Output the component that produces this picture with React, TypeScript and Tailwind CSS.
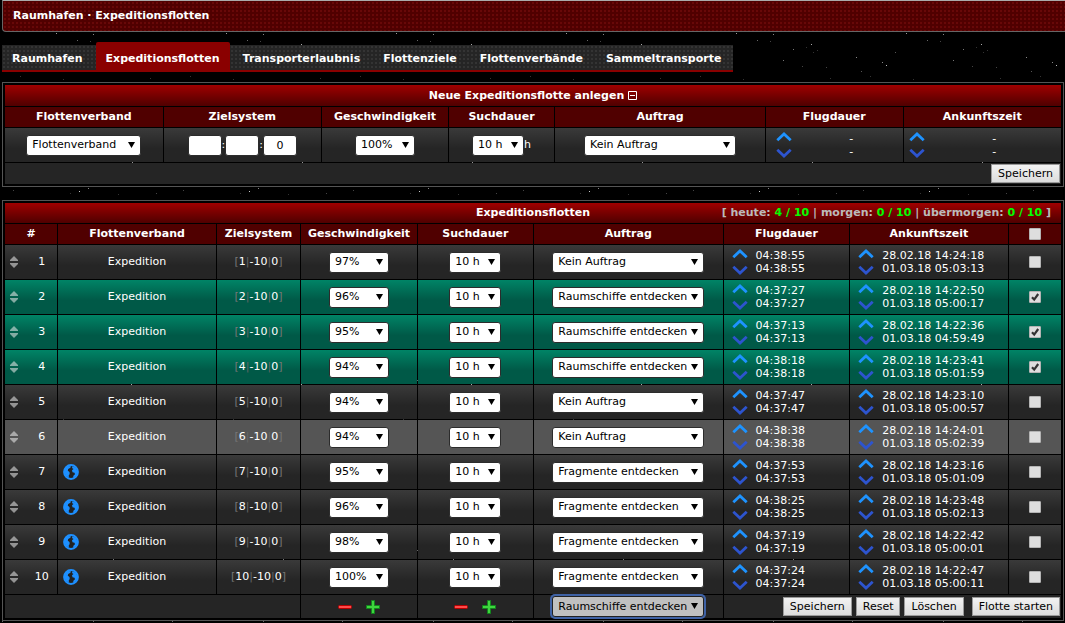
import { useId } from 'react';
import type { ReactNode } from 'react';

const tabs = [
  'Raumhafen',
  'Expeditionsflotten',
  'Transporterlaubnis',
  'Flottenziele',
  'Flottenverbände',
  'Sammeltransporte',
];

const missions = ['Kein Auftrag', 'Raumschiffe entdecken', 'Fragmente entdecken'];
const speeds = ['100%', '98%', '97%', '96%', '95%', '94%'];

const fleets = [
  { id: 1, speed: '97%', mission: 0, duration: '04:38:55', arrival: '28.02.18 14:24:18', back: '01.03.18 05:03:13' },
  { id: 2, speed: '96%', mission: 1, duration: '04:37:27', arrival: '28.02.18 14:22:50', back: '01.03.18 05:00:17', checked: true },
  { id: 3, speed: '95%', mission: 1, duration: '04:37:13', arrival: '28.02.18 14:22:36', back: '01.03.18 04:59:49', checked: true },
  { id: 4, speed: '94%', mission: 1, duration: '04:38:18', arrival: '28.02.18 14:23:41', back: '01.03.18 05:01:59', checked: true },
  { id: 5, speed: '94%', mission: 0, duration: '04:37:47', arrival: '28.02.18 14:23:10', back: '01.03.18 05:00:57' },
  { id: 6, speed: '94%', mission: 0, duration: '04:38:38', arrival: '28.02.18 14:24:01', back: '01.03.18 05:02:39', active: true },
  { id: 7, speed: '95%', mission: 2, duration: '04:37:53', arrival: '28.02.18 14:23:16', back: '01.03.18 05:01:09', flying: true },
  { id: 8, speed: '96%', mission: 2, duration: '04:38:25', arrival: '28.02.18 14:23:48', back: '01.03.18 05:02:13', flying: true },
  { id: 9, speed: '98%', mission: 2, duration: '04:37:19', arrival: '28.02.18 14:22:42', back: '01.03.18 05:00:01', flying: true },
  { id: 10, speed: '100%', mission: 2, duration: '04:37:24', arrival: '28.02.18 14:22:47', back: '01.03.18 05:00:11', flying: true },
];

const titleCell = 'bg-linear-to-b from-[#a00000] to-[#500000] p-0 font-bold';
const headCell = 'h-5 bg-[#500000] p-0 font-bold';
const darkCell = 'bg-linear-to-b from-[#3a3a3a] to-[#252525] to-60%';
const greenCell = 'bg-linear-to-b from-[#008466] to-[#005947] to-60%';
const activeCell = 'bg-[#555555]';

// x, y, brightness
const stars: [number, number, string][] = [
  [56, 33, '#999'], [93, 34, '#888'], [77, 40, '#666'], [90, 41, '#444'], [131, 44, '#aaa'],
  [113, 49, '#777'], [103, 60, '#777'], [45, 52, '#555'], [6, 57, '#888'], [32, 62, '#888'],
  [36, 65, '#bbb'], [11, 71, '#555'], [146, 67, '#444'], [133, 52, '#333'], [126, 47, '#333'],
  [137, 50, '#333'], [122, 66, '#444'], [20, 76, '#333'], [150, 78, '#333'], [63, 79, '#333'],
  [79, 21, '#ccc'], [88, 18, '#888'], [13, 20, '#444'], [70, 23, '#333'], [118, 24, '#333'],
  [98, 16, '#333'], [156, 23, '#444'], [132, 162, '#999'], [60, 96, '#555'], [45, 125, '#555'],
  [93, 111, '#666'], [2, 111, '#666'],
];

function Stars() {
  return (
    <svg className="absolute inset-0 -z-10 h-full w-full" aria-hidden="true">
      <defs>
        <pattern id="stars" width="170" height="170" patternUnits="userSpaceOnUse">
          {stars.map(([x, y, fill]) => (
            <rect key={`${x}-${y}`} x={x} y={y} width="1" height="1" fill={fill} />
          ))}
        </pattern>
      </defs>
      <rect width="100%" height="100%" fill="url(#stars)" />
    </svg>
  );
}

type SelectProps = {
  label: string;
  options: string[];
  value: string;
  width: string;
  focused?: boolean;
};

function Select({ label, options, value, width, focused }: SelectProps) {
  const id = useId();
  return (
    <span className={`relative inline-block h-[21px] align-middle ${width}`}>
      <label htmlFor={id} className="sr-only">
        {label}
      </label>
      <select
        id={id}
        defaultValue={value}
        className={`block h-[21px] w-full appearance-none rounded-[3px] border pl-[5px] text-[11px] text-black outline-none ${
          focused ? 'border-[#222] bg-[#c0c0c0] ring-2 ring-[#3f62a5]' : 'border-[#2c2c2c] bg-white'
        }`}
      >
        {options.map((option) => (
          <option key={option}>{option}</option>
        ))}
      </select>
      <svg viewBox="0 0 7 6" className="pointer-events-none absolute top-[7px] right-[6px] h-[6px] w-[7px]">
        <path d="M0 0h7L3.5 6z" fill="#000" />
      </svg>
    </span>
  );
}

function Checkbox({ label, checked }: { label: string; checked?: boolean }) {
  return (
    <span className="relative inline-block h-3 w-3 align-middle">
      <input
        type="checkbox"
        aria-label={label}
        defaultChecked={checked}
        className="peer block h-3 w-3 appearance-none rounded-[1px] border border-[#b4b4b4] bg-[#dedede]"
      />
      <svg viewBox="0 0 12 12" className="pointer-events-none absolute inset-0 hidden h-3 w-3 peer-checked:block">
        <path d="M3 6.2 5.2 8.6 9.2 3" fill="none" stroke="#333" strokeWidth="2.2" />
      </svg>
    </span>
  );
}

function Button({ children }: { children: ReactNode }) {
  return (
    <button
      type="button"
      className="h-[19px] border border-[#9a9a9a] bg-linear-to-b from-[#f2f2f2] to-[#dcdcdc] px-[6px] text-[11px] leading-[17px] text-black"
    >
      {children}
    </button>
  );
}

function UpDown() {
  return (
    <span className="flex w-4 flex-none flex-col gap-[6px]">
      <button type="button" aria-label="Früher" className="block h-[10px] w-4">
        <svg viewBox="0 0 16 10" className="block h-[10px] w-4">
          <path d="M1.3 8.2 8 2 14.7 8.2" fill="none" stroke="#1e93ff" strokeWidth="2.8" />
        </svg>
      </button>
      <button type="button" aria-label="Später" className="block h-[10px] w-4">
        <svg viewBox="0 0 16 10" className="block h-[10px] w-4">
          <path d="M1.3 1.8 8 8 14.7 1.8" fill="none" stroke="#2d54cf" strokeWidth="2.8" />
        </svg>
      </button>
    </span>
  );
}

function Times({ first, second }: { first: string; second: string }) {
  return (
    <div className="flex items-center gap-2 pl-2 text-left leading-[13px]">
      <UpDown />
      <div>
        <div>{first}</div>
        <div>{second}</div>
      </div>
    </div>
  );
}

function SortHandle() {
  return (
    <svg viewBox="0 0 8 12" className="h-3 w-2 flex-none" opacity="0.55">
      <path d="M4 0 8 4v1H0V4zM0 7h8v1L4 12 0 8z" fill="#eee" />
    </svg>
  );
}

function Globe() {
  return (
    <svg viewBox="0 0 16 16" className="h-4 w-4">
      <circle cx="8" cy="8" r="6.9" fill="#222" stroke="#1e90ff" strokeWidth="2" />
      <path d="M2 4 5 2l3 .3-.6 1.5L5.200 5l-.4 1.800L6.500 8l.2 2-1 1.500.3 2.300L2.800 12 1.200 8z" fill="#1e90ff" />
      <path d="M9.500 2.300 13 3.800l1.800 4.400-1.400 3.600L10.500 14l-.3-2 1.800-1.700-.5-1.500-2-.6-.5-2 1.500-1.200L9 4z" fill="#1e90ff" />
    </svg>
  );
}

function PlusMinus() {
  return (
    <div className="flex items-center justify-center gap-3">
      <button type="button" aria-label="Weniger" className="h-4 w-4">
        <svg viewBox="0 0 16 16" className="h-4 w-4">
          <rect x="1.500" y="6.500" width="13" height="3" rx="1" fill="#ff4a4a" stroke="#b80000" />
        </svg>
      </button>
      <button type="button" aria-label="Mehr" className="h-4 w-4">
        <svg viewBox="0 0 16 16" className="h-4 w-4">
          <path d="M6.500 1.500h3v5h5v3h-5v5h-3v-5h-5v-3h5z" fill="#3ed63e" stroke="#12861d" />
        </svg>
      </button>
    </div>
  );
}

function CoordInput({ label, value }: { label: string; value?: string }) {
  return (
    <input
      type="text"
      aria-label={label}
      defaultValue={value}
      className="h-[21px] w-[34px] rounded-[3px] border border-[#2c2c2c] bg-white text-center text-[11px] text-black"
    />
  );
}

function Count({ value }: { value: string }) {
  return <span className="text-[#00ff00]">{value}</span>;
}

function NewFleet() {
  return (
    <section className="mt-[10px] mr-px ml-[2px] border border-[#555] p-px">
      <table className="w-full table-fixed border-separate border-spacing-px text-center">
        <colgroup>
          <col className="w-[15%]" />
          <col className="w-[15%]" />
          <col className="w-[12%]" />
          <col className="w-[10%]" />
          <col className="w-[20%]" />
          <col className="w-[13%]" />
          <col className="w-[15%]" />
        </colgroup>
        <thead>
          <tr>
            <th colSpan={7} className={`h-[21px] ${titleCell}`}>
              <div className="flex items-center justify-center gap-1">
                Neue Expeditionsflotte anlegen
                <button type="button" aria-label="Einklappen">
                  <svg viewBox="0 0 9 9" className="block h-[9px] w-[9px]">
                    <path d="M.5.5h8v8h-8zM2 4.500h5" fill="none" stroke="#fff" />
                  </svg>
                </button>
              </div>
            </th>
          </tr>
          <tr>
            <th className={headCell}>Flottenverband</th>
            <th className={headCell}>Zielsystem</th>
            <th className={headCell}>Geschwindigkeit</th>
            <th className={headCell}>Suchdauer</th>
            <th className={headCell}>Auftrag</th>
            <th className={headCell}>Flugdauer</th>
            <th className={headCell}>Ankunftszeit</th>
          </tr>
        </thead>
        <tbody>
          <tr>
            <td className={`h-[34px] p-0 ${darkCell}`}>
              <Select label="Flottenverband" options={['Flottenverband']} value="Flottenverband" width="w-[115px]" />
            </td>
            <td className={`p-0 ${darkCell}`}>
              <div className="flex items-center justify-center">
                <CoordInput label="Galaxie" />:
                <CoordInput label="System" />:
                <CoordInput label="Planet" value="0" />
              </div>
            </td>
            <td className={`p-0 ${darkCell}`}>
              <Select label="Geschwindigkeit" options={speeds} value="100%" width="w-[60px]" />
            </td>
            <td className={`p-0 ${darkCell}`}>
              <div className="flex items-center justify-center">
                <Select label="Suchdauer" options={['10 h']} value="10 h" width="w-[52px]" />h
              </div>
            </td>
            <td className={`p-0 ${darkCell}`}>
              <Select label="Auftrag" options={missions} value={missions[0]} width="w-[152px]" />
            </td>
            <td className={`p-0 ${darkCell}`}>
              <div className="flex items-center gap-2 pl-[10px] leading-[13px]">
                <UpDown />
                <div className="flex-1">
                  <div>-</div>
                  <div>-</div>
                </div>
              </div>
            </td>
            <td className={`p-0 ${darkCell}`}>
              <div className="flex items-center gap-2 px-[5px] leading-[13px]">
                <UpDown />
                <div className="flex-1">
                  <div>-</div>
                  <div>-</div>
                </div>
              </div>
            </td>
          </tr>
          <tr>
            <td colSpan={7} className="h-[21px] bg-[#252525] p-0">
              <div className="flex justify-end pr-px">
                <Button>Speichern</Button>
              </div>
            </td>
          </tr>
        </tbody>
      </table>
    </section>
  );
}

function FleetList() {
  return (
    <section className="mt-[13px] mr-px ml-[2px] border border-[#555] p-px">
      <table className="w-full table-fixed border-separate border-spacing-px text-center">
        <colgroup>
          <col className="w-[5%]" />
          <col className="w-[15%]" />
          <col className="w-[8%]" />
          <col className="w-[11%]" />
          <col className="w-[11%]" />
          <col className="w-[18%]" />
          <col className="w-[12%]" />
          <col className="w-[15%]" />
          <col className="w-[5%]" />
        </colgroup>
        <thead>
          <tr>
            <th colSpan={9} className={`h-5 ${titleCell}`}>
              <div className="grid grid-cols-[1fr_auto_1fr] items-center pr-[10px] pl-[10px]">
                <span className="col-start-2">Expeditionsflotten</span>
                <span className="text-right whitespace-nowrap text-[#bbb]">
                  [ heute: <Count value="4 / 10" /> | morgen: <Count value="0 / 10" /> | übermorgen:{' '}
                  <Count value="0 / 10" /> ]
                </span>
              </div>
            </th>
          </tr>
          <tr>
            <th className={headCell}>#</th>
            <th className={headCell}>Flottenverband</th>
            <th className={headCell}>Zielsystem</th>
            <th className={headCell}>Geschwindigkeit</th>
            <th className={headCell}>Suchdauer</th>
            <th className={headCell}>Auftrag</th>
            <th className={headCell}>Flugdauer</th>
            <th className={headCell}>Ankunftszeit</th>
            <th className={headCell}>
              <Checkbox label="Alle auswählen" />
            </th>
          </tr>
        </thead>
        <tbody>
          {fleets.map((fleet) => {
            const cell = `p-0 ${fleet.checked ? greenCell : fleet.active ? activeCell : darkCell}`;
            return (
              <tr key={fleet.id} className="h-[34px]">
                <td className={cell}>
                  <div className="flex items-center gap-2 pl-[5px]">
                    <SortHandle />
                    <span className="flex-1">{fleet.id}</span>
                  </div>
                </td>
                <td className={cell}>
                  <div className="grid grid-cols-[16px_1fr_16px] items-center px-[5px]">
                    {fleet.flying && <Globe />}
                    <span className="col-start-2">Expedition</span>
                  </div>
                </td>
                <td className={cell}>
                  <span className="text-[#777]">[</span>
                  {fleet.id}
                  <span className="text-[#666]">|</span>-10
                  <span className="text-[#666]">|</span>0<span className="text-[#777]">]</span>
                </td>
                <td className={cell}>
                  <Select label={`Geschwindigkeit ${fleet.id}`} options={speeds} value={fleet.speed} width="w-[60px]" />
                </td>
                <td className={cell}>
                  <Select label={`Suchdauer ${fleet.id}`} options={['10 h']} value="10 h" width="w-[52px]" />
                </td>
                <td className={cell}>
                  <Select
                    label={`Auftrag ${fleet.id}`}
                    options={missions}
                    value={missions[fleet.mission]}
                    width="w-[152px]"
                  />
                </td>
                <td className={cell}>
                  <Times first={fleet.duration} second={fleet.duration} />
                </td>
                <td className={cell}>
                  <Times first={fleet.arrival} second={fleet.back} />
                </td>
                <td className={cell}>
                  <Checkbox label={`Flotte ${fleet.id} auswählen`} checked={fleet.checked} />
                </td>
              </tr>
            );
          })}
          <tr className="h-[23px]">
            <td colSpan={3} className="bg-[#252525] p-0" />
            <td className="bg-[#252525] p-0">
              <PlusMinus />
            </td>
            <td className="bg-[#252525] p-0">
              <PlusMinus />
            </td>
            <td className="bg-[#252525] p-0">
              <Select label="Auftrag für alle" options={missions} value={missions[1]} width="w-[152px]" focused />
            </td>
            <td colSpan={3} className="bg-[#252525] p-0">
              <div className="flex justify-end gap-2 pr-px">
                <div className="flex gap-1">
                  <Button>Speichern</Button>
                  <Button>Reset</Button>
                  <Button>Löschen</Button>
                </div>
                <Button>Flotte starten</Button>
              </div>
            </td>
          </tr>
        </tbody>
      </table>
    </section>
  );
}

export default function App() {
  return (
    <div className="relative isolate min-h-screen overflow-hidden bg-black font-['DejaVu_Sans',sans-serif] text-[11px] leading-4 text-white">
      <Stars />
      <header className="ml-[2px] h-8 rounded-bl-[4px] border-t border-b border-l border-[#666] border-t-[#aaa] bg-[#500000] bg-[radial-gradient(#680808_25%,transparent_30%)] bg-size-[4px_4px] pl-[10px]">
        <h1 className="font-bold leading-[30px]">Raumhafen · Expeditionsflotten</h1>
      </header>
      <nav className="mt-[13px] ml-[2px] flex">
        <ul className="flex h-[27px] gap-[3px] border-b-2 border-[#8a0000] bg-[#252525] bg-[radial-gradient(#343434_25%,transparent_30%)] bg-size-[4px_4px] pr-[2px] font-bold">
          {tabs.map((tab) => (
            <li key={tab}>
              <a
                href="#"
                className={
                  tab === 'Expeditionsflotten'
                    ? '-mt-[3px] block h-[28px] rounded-t-[2px] bg-[#8a0000] px-[10px] pt-[3px] leading-[27px]'
                    : 'block h-[25px] px-[10px] leading-[27px]'
                }
              >
                {tab}
              </a>
            </li>
          ))}
        </ul>
      </nav>
      <NewFleet />
      <FleetList />
    </div>
  );
}
